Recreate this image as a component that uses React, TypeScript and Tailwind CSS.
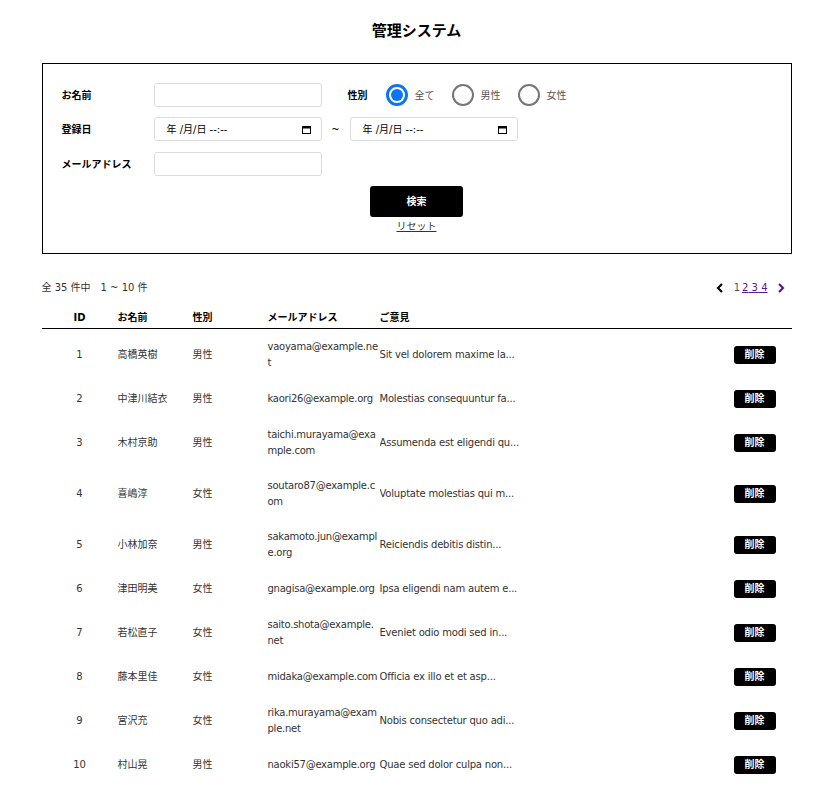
import React, { useState } from 'react'

interface User {
  id: number
  name: string
  gender: string
  email: string
  opinion: string
}

const users: User[] = [
  { id: 1, name: '高橋英樹', gender: '男性', email: 'vaoyama@example.net', opinion: 'Sit vel dolorem maxime la...' },
  { id: 2, name: '中津川結衣', gender: '男性', email: 'kaori26@example.org', opinion: 'Molestias consequuntur fa...' },
  { id: 3, name: '木村京助', gender: '男性', email: 'taichi.murayama@example.com', opinion: 'Assumenda est eligendi qu...' },
  { id: 4, name: '喜嶋淳', gender: '女性', email: 'soutaro87@example.com', opinion: 'Voluptate molestias qui m...' },
  { id: 5, name: '小林加奈', gender: '男性', email: 'sakamoto.jun@example.org', opinion: 'Reiciendis debitis distin...' },
  { id: 6, name: '津田明美', gender: '女性', email: 'gnagisa@example.org', opinion: 'Ipsa eligendi nam autem e...' },
  { id: 7, name: '若松直子', gender: '女性', email: 'saito.shota@example.net', opinion: 'Eveniet odio modi sed in...' },
  { id: 8, name: '藤本里佳', gender: '女性', email: 'midaka@example.com', opinion: 'Officia ex illo et et asp...' },
  { id: 9, name: '宮沢充', gender: '女性', email: 'rika.murayama@example.net', opinion: 'Nobis consectetur quo adi...' },
  { id: 10, name: '村山晃', gender: '男性', email: 'naoki57@example.org', opinion: 'Quae sed dolor culpa non...' },
]

function DateBox() {
  return (
    <div className="w-[168px] h-6 border border-[#dcdcdc] rounded-[3px] flex items-center justify-between pl-3 pr-2.5 text-[10px] text-black">
      <span>年 /月/日 --:--</span>
      <svg width="9" height="9" viewBox="0 0 9 9">
        <rect x="0.5" y="1.5" width="8" height="7" fill="none" stroke="#000" strokeWidth="1" />
        <rect x="0.5" y="1.5" width="8" height="2" fill="#000" />
      </svg>
    </div>
  )
}

function Radio({ checked, label, onClick }: { checked: boolean; label: string; onClick: () => void }) {
  return (
    <label className="flex items-center gap-[7px] cursor-pointer" onClick={onClick}>
      {checked ? (
        <span className="w-[22px] h-[22px] rounded-full border-[3px] border-[#0b75f5] flex items-center justify-center">
          <span className="w-[12px] h-[12px] rounded-full bg-[#0b75f5]" />
        </span>
      ) : (
        <span className="w-[22px] h-[22px] rounded-full border-2 border-[#767676]" />
      )}
      <span className="text-[10px] text-[#555]">{label}</span>
    </label>
  )
}

export default function App() {
  const [gender, setGender] = useState('all')

  return (
    <div className="min-h-screen bg-white text-[#333] font-['DejaVu_Sans','Noto_Sans_CJK_JP',sans-serif]">
      <div className="w-[750px] mx-auto pt-[21px] pb-5">
        <h1 className="text-center text-[15px] leading-5 font-bold text-black">管理システム</h1>

        {/* 検索フォーム */}
        <div className="mt-[22px] border border-black pt-[19px] pb-[18px] px-[19px]">
          <div className="flex flex-col gap-[10px]">
            <div className="flex items-center h-6">
              <span className="w-[92px] text-[10px] font-bold text-black">お名前</span>
              <input className="w-[168px] h-6 border border-[#dcdcdc] rounded-[3px] outline-none px-2 text-[10px]" />
              <span className="ml-[26px] mr-[18px] text-[10px] font-bold text-black">性別</span>
              <div className="flex items-center gap-[17px]">
                <Radio checked={gender === 'all'} label="全て" onClick={() => setGender('all')} />
                <Radio checked={gender === 'male'} label="男性" onClick={() => setGender('male')} />
                <Radio checked={gender === 'female'} label="女性" onClick={() => setGender('female')} />
              </div>
            </div>
            <div className="flex items-center h-6">
              <span className="w-[92px] text-[10px] font-bold text-black">登録日</span>
              <DateBox />
              <span className="w-7 text-center text-[10px] text-black">~</span>
              <DateBox />
            </div>
            <div className="flex items-center h-6 mt-px">
              <span className="w-[92px] text-[10px] font-bold text-black">メールアドレス</span>
              <input className="w-[168px] h-6 border border-[#dcdcdc] rounded-[3px] outline-none px-2 text-[10px]" />
            </div>
          </div>
          <div className="mt-[10px] flex flex-col items-center">
            <button className="w-[93px] h-[31px] bg-black rounded-[3px] text-white text-[10px] font-bold">検索</button>
            <a className="mt-[2px] text-[10px] leading-4 text-[#333] underline cursor-pointer">リセット</a>
          </div>
        </div>

        {/* 件数・ページャー */}
        <div className="mt-[26px] flex items-center justify-between text-[10px] leading-4">
          <span>全 35 件中　1 ~ 10 件</span>
          <div className="flex items-center mr-[7px]">
            <svg width="8" height="10" viewBox="0 0 8 10" className="mr-[10px]">
              <path d="M6 1L2 5l4 4" fill="none" stroke="#000" strokeWidth="2.2" />
            </svg>
            <span className="text-[#555]">1</span>
            <a className="ml-[2px] text-[#551a8b] underline cursor-pointer">2</a>
            <a className="text-[#551a8b] underline cursor-pointer">&nbsp;3</a>
            <a className="text-[#551a8b] underline cursor-pointer">&nbsp;4</a>
            <svg width="8" height="10" viewBox="0 0 8 10" className="ml-[9px]">
              <path d="M2 1l4 4-4 4" fill="none" stroke="#551a8b" strokeWidth="2.2" />
            </svg>
          </div>
        </div>

        {/* 一覧 */}
        <table className="mt-[14px] w-full table-fixed border-collapse text-[10px] leading-4">
          <colgroup>
            <col className="w-[76px]" />
            <col className="w-[75px]" />
            <col className="w-[75px]" />
            <col className="w-[112px]" />
            <col />
            <col className="w-[100px]" />
          </colgroup>
          <thead>
            <tr className="border-b border-black text-black">
              <th className="text-center font-bold pb-[2px]">ID</th>
              <th className="text-left font-bold pb-[2px]">お名前</th>
              <th className="text-left font-bold pb-[2px]">性別</th>
              <th className="text-left font-bold pb-[2px]">メールアドレス</th>
              <th className="text-left font-bold pb-[2px]">ご意見</th>
              <th />
            </tr>
          </thead>
          <tbody>
            {users.map((u) => (
              <tr key={u.id}>
                <td className="text-center py-[9.5px]">{u.id}</td>
                <td className="py-[9.5px]">{u.name}</td>
                <td className="py-[9.5px]">{u.gender}</td>
                <td className="py-[9.5px] break-all tracking-[-0.25px]">{u.email}</td>
                <td className="py-[9.5px] whitespace-nowrap overflow-hidden tracking-[-0.2px]">{u.opinion}</td>
                <td className="py-[9.5px] pr-4">
                  <button className="block ml-auto w-[42px] h-[18px] bg-black rounded-[3px] text-white text-[10px] font-bold leading-none">
                    削除
                  </button>
                </td>
              </tr>
            ))}
          </tbody>
        </table>
      </div>
    </div>
  )
}
